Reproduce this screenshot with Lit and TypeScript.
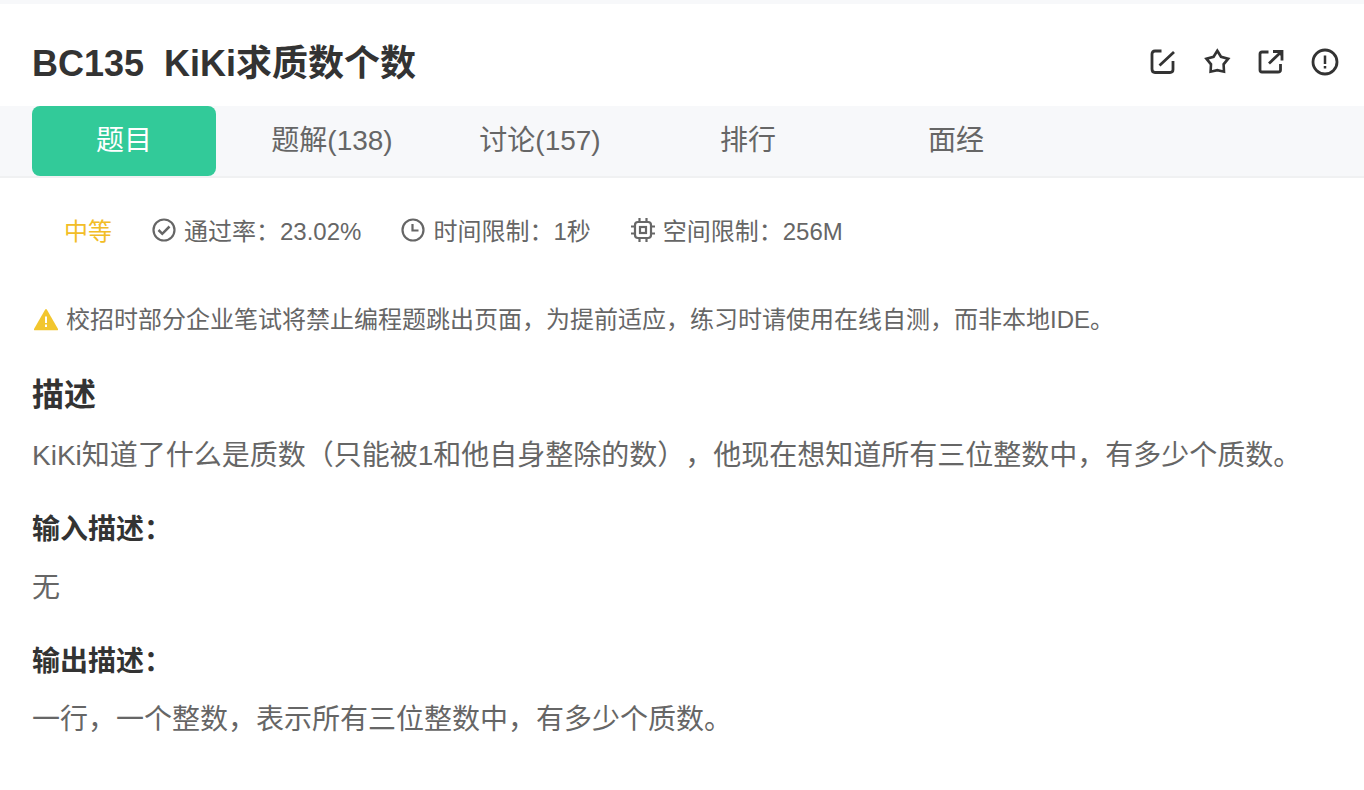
import { LitElement, html, css, svg } from "lit";
import { customElement, state } from "lit/decorators.js";

const icons = {
  edit: svg`<path d="M12.500 3H6Q3 3 3 6V21Q3 24.500 6 24.500H21Q24 24.500 24 21.500V13M10.500 17.500L25 4"/>`,
  star: svg`<path stroke-width="2.600" d="M14.300 2.800L18 8.800L25.200 10.700L20.600 16.300L21 23.700L14.300 22.200L7.600 23.700L8 16.300L3.400 10.700L10.600 8.800Z"/>`,
  share: svg`<path d="M11.500 4H5Q3 4 3 6V22Q3 24 5 24H21Q23.500 24 23.500 22V16M12 15.500L23 5M16 3.500H25V12.500"/><path fill="currentColor" stroke="none" d="M19 3H25.500V9.500Z"/>`,
  report: svg`<circle cx="14" cy="14" r="12"/><path stroke-width="2.500" d="M14 7.500V16M14 18V20.500"/>`,
  pass: svg`<circle cx="12" cy="12" r="10.500"/><path stroke-width="2.500" d="M6.500 12L10.300 15.800L17.500 8.500"/>`,
  time: svg`<circle cx="12" cy="12" r="10.500"/><path d="M11.500 6V12.500H17.500"/>`,
  memory: svg`<rect x="4" y="4" width="16" height="16" rx="3"/><rect x="9" y="9" width="6" height="6"/><path d="M8.500 0V4M15.500 0V4M8.500 20V24M15.500 20V24M0 8.500H4M0 15.500H4M20 8.500H24M20 15.500H24"/>`,
};

@customElement("app-root")
export class AppRoot extends LitElement {
  @state() private active = 0;

  private tabs = ["题目", "题解(138)", "讨论(157)", "排行", "面经"];
  private actions = [
    { label: "笔记", icon: icons.edit },
    { label: "收藏", icon: icons.star },
    { label: "分享", icon: icons.share },
    { label: "反馈", icon: icons.report },
  ];
  private limits = [
    { text: "通过率：23.02%", icon: icons.pass },
    { text: "时间限制：1秒", icon: icons.time },
    { text: "空间限制：256M", icon: icons.memory },
  ];

  static styles = css`
    :host {
      display: block;
      border-top: 4px solid #f7f8fa;
      background: #fff;
      color: #666;
      font-family: "Liberation Sans", "Noto Sans CJK SC", sans-serif;
      font-size: 28px;
      line-height: 40px;
      text-spacing-trim: space-all;
    }
    * {
      box-sizing: border-box;
    }
    h1, h2, h3, p {
      margin: 0;
    }
    svg {
      display: block;
      flex: none;
      fill: none;
      stroke: currentColor;
    }
    .header {
      display: flex;
      align-items: flex-start;
      justify-content: space-between;
      padding: 34px 24px 16px 32px;
    }
    h1 {
      color: #333;
      font-size: 36px;
      line-height: 52px;
      white-space: pre-wrap;
    }
    .actions {
      display: flex;
      gap: 24px;
      padding-top: 10px;
    }
    .action {
      padding: 0 1px;
      border: 0;
      background: none;
      color: #333;
      cursor: pointer;
    }
    .action svg {
      width: 28px;
      height: 28px;
      stroke-width: 2.800;
    }
    .tabs {
      display: flex;
      gap: 24px;
      padding: 0 32px;
      border-bottom: 2px solid #f0f1f2;
      background: #f7f8fa;
    }
    .tab {
      width: 184px;
      height: 70px;
      padding: 0;
      border: 0;
      border-radius: 8px;
      background: none;
      color: #666;
      font: inherit;
      cursor: pointer;
    }
    .tab.active {
      background: #32ca99;
      color: #fff;
    }
    .meta {
      display: flex;
      gap: 40px;
      padding: 34px 64px 0;
      font-size: 24px;
    }
    .level {
      color: #f2bd26;
    }
    .limit, .notice {
      display: flex;
      align-items: center;
      gap: 8px;
    }
    .limit svg {
      width: 24px;
      height: 24px;
      margin-bottom: 4px;
      stroke-width: 2.200;
    }
    .content {
      padding: 48px 32px;
    }
    .notice {
      font-size: 24px;
      padding-left: 2px;
    }
    .notice svg {
      width: 24px;
      height: 24px;
      stroke: none;
    }
    h2, h3 {
      color: #333;
    }
    h2 {
      margin: 35px 0 21px;
      font-size: 32px;
    }
    h3 {
      margin: 34px 0 18px;
      font-size: 28px;
    }
  `;

  render() {
    return html`
      <header class="header">
        <h1>BC135  KiKi求质数个数</h1>
        <div class="actions">
          ${this.actions.map(
            (a) => html`<button class="action" aria-label=${a.label}>
              <svg viewBox="0 0 28 28">${a.icon}</svg>
            </button>`
          )}
        </div>
      </header>
      <nav class="tabs" role="tablist">
        ${this.tabs.map(
          (t, i) => html`<button
            class="tab ${i === this.active ? "active" : ""}"
            role="tab"
            aria-selected=${i === this.active}
            @click=${() => (this.active = i)}
          >${t}</button>`
        )}
      </nav>
      <div class="meta">
        <span class="level">中等</span>
        ${this.limits.map(
          (l) => html`<span class="limit"><svg viewBox="0 0 24 24">${l.icon}</svg>${l.text}</span>`
        )}
      </div>
      <main class="content">
        <p class="notice">
          <svg viewBox="0 0 24 24">
            <path fill="#f2c62e" d="M11.200 1.500Q12 0.500 12.800 1.500L24 21Q24.500 22.200 23 22.200H1Q-0.500 22.200 0 21Z"/>
            <path fill="#fff" d="M11 8.500H13V15H11ZM11 16.500H13V19H11Z"/>
          </svg>
          校招时部分企业笔试将禁止编程题跳出页面，为提前适应，练习时请使用在线自测，而非本地IDE。
        </p>
        <h2>描述</h2>
        <p>KiKi知道了什么是质数（只能被1和他自身整除的数），他现在想知道所有三位整数中，有多少个质数。</p>
        <h3>输入描述：</h3>
        <p>无</p>
        <h3>输出描述：</h3>
        <p>一行，一个整数，表示所有三位整数中，有多少个质数。</p>
      </main>
    `;
  }
}
